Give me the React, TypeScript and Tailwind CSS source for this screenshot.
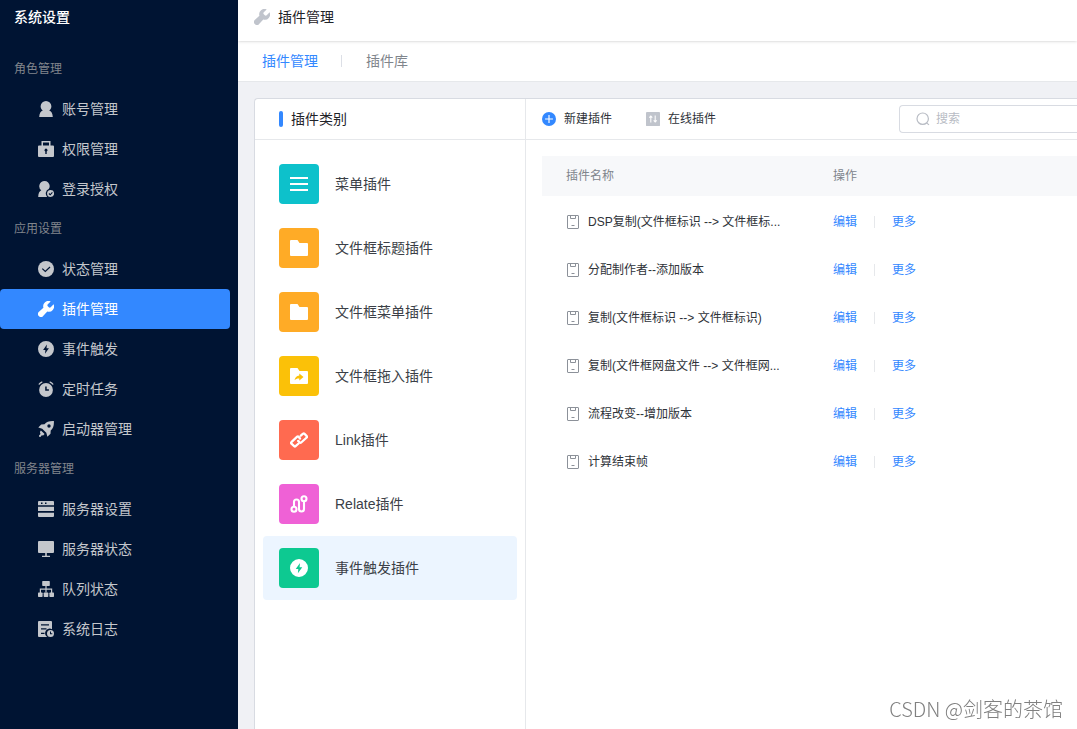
import React, { useState } from 'react';
import { clsx } from 'clsx';

type IconProps = { className?: string };

const Svg = ({ className = 'size-4', children }: IconProps & { children: React.ReactNode }) => (
  <svg viewBox="0 0 16 16" fill="currentColor" aria-hidden="true" className={clsx('shrink-0', className)}>
    {children}
  </svg>
);

const UserIcon = () => (
  <Svg>
    <path d="M8 0a5.400 5.400 0 0 1 5.400 5.200c0 1.900-.9 3.200-2.200 4.200 2 .8 3.400 2.600 3.600 6.600H1.200c.2-4 1.600-5.800 3.600-6.600C3.500 8.400 2.600 7.100 2.600 5.200A5.400 5.400 0 0 1 8 0z" />
  </Svg>
);

const LockIcon = () => (
  <Svg>
    <path
      fillRule="evenodd"
      d="M3.500 0h9v4.600H15a1 1 0 0 1 1 1V15a1 1 0 0 1-1 1H1a1 1 0 0 1-1-1V5.600a1 1 0 0 1 1-1h2.500zM5 1.500v3.100h6V1.500zM7.300 13h1.400v-2.400a1.500 1.500 0 1 0-1.400 0z"
    />
  </Svg>
);

const UserCheckIcon = () => (
  <Svg>
    <path d="M6.500 0a5.200 5.200 0 0 1 5.200 5.100c0 1.200-.4 2.200-1 3A4.800 4.800 0 0 0 9 15.700V16H.2c.1-3.800 1.200-5.700 3.100-6.700A5.200 5.200 0 0 1 6.500 0z" />
    <circle cx="12.600" cy="12.500" r="3.500" />
    <path d="M10.900 12.500l1.300 1.300 2.200-2.400" fill="none" stroke="#001433" strokeWidth="1.100" />
  </Svg>
);

const CheckIcon = () => (
  <Svg>
    <circle cx="8" cy="8" r="8" />
    <path d="M4.300 7.600l3 2.900 4.700-4.500" fill="none" stroke="#001433" strokeWidth="1.200" />
  </Svg>
);

const WrenchIcon = () => (
  <Svg>
    <path d="M12.700.4A5.300 5.300 0 0 0 5.400 6.700L.7 11.100a2.500 2.500 0 0 0-.1 3.600l.7.7a2.500 2.500 0 0 0 3.600-.1l4.400-4.700A5.300 5.300 0 0 0 15.600 3.300l-2.900 2.900a1.400 1.400 0 0 1-1.900 0l-1-1a1.400 1.400 0 0 1 0-1.900z" />
  </Svg>
);

const BoltIcon = ({ className }: IconProps) => (
  <Svg className={className}>
    <path
      fillRule="evenodd"
      d="M8 0a8 8 0 1 1 0 16A8 8 0 0 1 8 0zM8.900 3.500L5.100 8.900h2.300l-.4 3.800 3.900-5.400H8.500z"
    />
  </Svg>
);

const ClockIcon = () => (
  <Svg>
    <path fillRule="evenodd" d="M8 2.100a6.900 6.900 0 1 1 0 13.800A6.900 6.900 0 0 1 8 2.100zM7.200 5.400v4.400h3.700V8.300H8.700V5.400z" />
    <path d="M.9 3.500A6 6 0 0 1 4.300.8M15.100 3.500A6 6 0 0 0 11.700.8" fill="none" stroke="currentColor" strokeWidth="1.400" />
  </Svg>
);

const RocketIcon = () => (
  <Svg>
    <path
      fillRule="evenodd"
      d="M15.900.1c.2 4.700-.8 7.300-3.200 9.400l-.2 3.300-3.100 2.900-1.100-3.900L4.200 7.700.3 6.600l2.900-3.100 3.300-.2C8.600.9 11.200-.1 15.900.1zM11 3.300a1.700 1.700 0 1 0 0 3.400 1.700 1.700 0 0 0 0-3.400z"
    />
    <path d="M2.900 9.400l3.700 3.700-1.500 1.300-1.300-.2L2.400 15.900l-1.300-.1-.1-1.200 1.500-1.700-.6-1.900z" />
  </Svg>
);

const ServerIcon = () => (
  <Svg>
    <path
      fillRule="evenodd"
      d="M1 0h14a1 1 0 0 1 1 1v3.200H0V1a1 1 0 0 1 1-1zM3 1.400V3h1.500V1.400zM7 1.400V3h1.500V1.400zM0 5.800h16v4.300H0zM0 11.800h16V15a1 1 0 0 1-1 1H1a1 1 0 0 1-1-1z"
    />
  </Svg>
);

const MonitorIcon = () => (
  <Svg>
    <path d="M1 0h14a1 1 0 0 1 1 1v10a1 1 0 0 1-1 1H8.800v2.700H12V16H4v-1.300h3.200V12H1a1 1 0 0 1-1-1V1a1 1 0 0 1 1-1z" />
  </Svg>
);

const TreeIcon = () => (
  <Svg>
    <rect x="4.200" width="7.600" height="5" rx=".7" />
    <path d="M8 4.500v7M2.400 12V8.100h11.200V12" fill="none" stroke="currentColor" strokeWidth="1.200" />
    <rect y="11.500" width="4.600" height="4.500" rx=".7" />
    <rect x="5.700" y="11.500" width="4.600" height="4.500" rx=".7" />
    <rect x="11.400" y="11.500" width="4.600" height="4.500" rx=".7" />
  </Svg>
);

const LogIcon = () => (
  <Svg>
    <path
      fillRule="evenodd"
      d="M1 0h12a1 1 0 0 1 1 1v7.300a4.300 4.300 0 0 0-4.800 7.700H1a1 1 0 0 1-1-1V1a1 1 0 0 1 1-1zM3 3.300v1.200h8V3.300zM3 7.300v1.200h5.500V7.300zM3 11.700v1.200h3.500v-1.200z"
    />
    <path
      fillRule="evenodd"
      d="M12.500 9a3.500 3.500 0 1 1 0 7 3.500 3.500 0 0 1 0-7zM12 10.500v2.700h2.300v-1H13v-1.700z"
    />
  </Svg>
);

const MenuLines = () => (
  <svg viewBox="0 0 18 18" className="size-[18px]" stroke="white" strokeWidth="2" aria-hidden="true">
    <path d="M0 3h18M0 9h18M0 15h18" />
  </svg>
);

const FolderIcon = () => (
  <svg viewBox="0 0 18 18" className="size-[18px]" fill="white" aria-hidden="true">
    <path d="M1 1h6.500L9.500 4H17a1 1 0 0 1 1 1v11a1 1 0 0 1-1 1H1a1 1 0 0 1-1-1V2a1 1 0 0 1 1-1z" />
  </svg>
);

const FolderShareIcon = () => (
  <svg viewBox="0 0 18 18" className="size-[18px]" fill="white" aria-hidden="true">
    <path
      fillRule="evenodd"
      d="M1 1h6.500L9.500 4H17a1 1 0 0 1 1 1v11a1 1 0 0 1-1 1H1a1 1 0 0 1-1-1V2a1 1 0 0 1 1-1zM9.300 6.500v2C6.500 8.900 5 10.600 4.500 13.200c1.300-1.400 2.800-1.900 4.800-1.800v2.100l4.200-3.500z"
    />
  </svg>
);

const LinkIcon = () => (
  <svg
    viewBox="0 0 18 18"
    className="size-[18px]"
    fill="none"
    stroke="white"
    strokeWidth="2.300"
    strokeLinejoin="round"
    strokeLinecap="round"
    aria-hidden="true"
  >
    <path d="M8.600 12.500l-3 2.600a1 1 0 0 1-1.400 0L1.400 12.600a1 1 0 0 1 0-1.400l5.800-5.500a1 1 0 0 1 1.400 0L10 7.500" />
    <path d="M10.800 4.700l2.300-2a1 1 0 0 1 1.400 0l2.200 2.400a1 1 0 0 1 0 1.400l-5.500 5a1 1 0 0 1-1.400 0L8.200 9.900" />
  </svg>
);

const RelateIcon = () => (
  <svg viewBox="0 0 18 18" className="size-[18px]" fill="none" stroke="white" strokeWidth="2.100" aria-hidden="true">
    <circle cx="4" cy="14.300" r="2.500" />
    <circle cx="14" cy="3.700" r="2.500" />
    <path d="M4 12V7a2.500 2.500 0 0 1 5 0v7a2.500 2.500 0 0 0 5 0V6" />
  </svg>
);

const PlusIcon = () => (
  <Svg className="size-3.5">
    <circle cx="8" cy="8" r="8" fill="#3388ff" />
    <path d="M8 3.500v9M3.500 8h9" stroke="white" strokeWidth="1.300" />
  </Svg>
);

const OnlineIcon = () => (
  <Svg className="size-3.5">
    <rect width="16" height="16" rx="1" fill="#c0c4cc" />
    <path d="M5.500 12V4.500M3.800 6.500l1.700-2 1.700 2M10.500 4v7.500M8.800 9.500l1.700 2 1.700-2" fill="none" stroke="white" strokeWidth="1.200" />
  </Svg>
);

const PluginIcon = () => (
  <svg viewBox="0 0 14 14" className="size-3.5 shrink-0" fill="none" stroke="#8c9199" aria-hidden="true">
    <rect x="1.500" y=".5" width="11" height="13" rx=".5" />
    <path d="M4.500.5v3h5v-3M5.500 10.500h3" />
  </svg>
);

const SearchIcon = () => (
  <svg viewBox="0 0 14 14" className="size-3.5 shrink-0" fill="none" stroke="#b8bcc4" strokeWidth="1.200" aria-hidden="true">
    <circle cx="6.700" cy="6.700" r="5.700" />
    <path d="M10.600 10.900l2.400 2" />
  </svg>
);

const menuGroups = [
  {
    title: '角色管理',
    items: [
      { label: '账号管理', Icon: UserIcon },
      { label: '权限管理', Icon: LockIcon },
      { label: '登录授权', Icon: UserCheckIcon },
    ],
  },
  {
    title: '应用设置',
    items: [
      { label: '状态管理', Icon: CheckIcon },
      { label: '插件管理', Icon: WrenchIcon },
      { label: '事件触发', Icon: BoltIcon },
      { label: '定时任务', Icon: ClockIcon },
      { label: '启动器管理', Icon: RocketIcon },
    ],
  },
  {
    title: '服务器管理',
    items: [
      { label: '服务器设置', Icon: ServerIcon },
      { label: '服务器状态', Icon: MonitorIcon },
      { label: '队列状态', Icon: TreeIcon },
      { label: '系统日志', Icon: LogIcon },
    ],
  },
];

const categories = [
  { label: '菜单插件', color: 'bg-[#0dc1cb]', icon: <MenuLines /> },
  { label: '文件框标题插件', color: 'bg-[#ffab26]', icon: <FolderIcon /> },
  { label: '文件框菜单插件', color: 'bg-[#ffab26]', icon: <FolderIcon /> },
  { label: '文件框拖入插件', color: 'bg-[#fbc108]', icon: <FolderShareIcon /> },
  { label: 'Link插件', color: 'bg-[#ff6a50]', icon: <LinkIcon /> },
  { label: 'Relate插件', color: 'bg-[#ef61d6]', icon: <RelateIcon /> },
  { label: '事件触发插件', color: 'bg-[#0dc991]', icon: <BoltIcon className="size-[18px] text-white" /> },
];

const plugins = [
  'DSP复制(文件框标识 --> 文件框标...',
  '分配制作者--添加版本',
  '复制(文件框标识 --> 文件框标识)',
  '复制(文件框网盘文件 --> 文件框网...',
  '流程改变--增加版本',
  '计算结束帧',
];

const Sidebar = () => {
  const [active, setActive] = useState('插件管理');

  return (
    <aside className="w-[238px] shrink-0 bg-[#001433] text-sm">
      <h1 className="h-[49px] pl-3.5 pt-[7px] leading-5 font-medium text-white">系统设置</h1>
      <nav>
        {menuGroups.map((group) => (
          <section key={group.title}>
            <h2 className="flex h-10 items-center pl-3.5 text-xs text-[#80858c]">{group.title}</h2>
            {group.items.map(({ label, Icon }) => (
              <button
                key={label}
                onClick={() => setActive(label)}
                className={clsx(
                  'flex h-10 w-[230px] items-center gap-2 rounded pl-[38px]',
                  active === label ? 'bg-[#3388ff] text-white' : 'text-[#c4c7cc]'
                )}
              >
                <Icon />
                {label}
              </button>
            ))}
          </section>
        ))}
      </nav>
    </aside>
  );
};

const CategoryList = () => {
  const [selected, setSelected] = useState('事件触发插件');

  return (
    <div className="w-[271px] shrink-0 border-r border-[#e6e8eb]">
      <h2 className="flex h-[41px] items-center gap-2 border-b border-[#e6e8eb] pl-6 text-sm text-[#1f2329]">
        <span className="h-4 w-1 rounded-xs bg-[#3388ff]" />
        插件类别
      </h2>
      <div className="px-2 py-3">
        {categories.map((c) => (
          <button
            key={c.label}
            onClick={() => setSelected(c.label)}
            className={clsx(
              'flex h-16 w-full items-center gap-4 rounded px-4 text-sm text-[#3b3f47]',
              selected === c.label && 'bg-[#ecf5ff]'
            )}
          >
            <span className={clsx('flex size-10 items-center justify-center rounded', c.color)}>{c.icon}</span>
            {c.label}
          </button>
        ))}
      </div>
    </div>
  );
};

const PluginTable = () => (
  <div className="min-w-0 flex-1">
    <div className="flex h-[41px] items-center border-b border-[#e6e8eb] pl-4 text-xs text-[#2e3238]">
      <button className="flex items-center gap-2">
        <PlusIcon />
        新建插件
      </button>
      <button className="ml-[34px] flex items-center gap-2">
        <OnlineIcon />
        在线插件
      </button>
      <label className="ml-auto flex h-7 w-[178px] items-center gap-1.5 rounded-l border border-r-0 border-[#d8dbe2] pl-4">
        <SearchIcon />
        <input
          type="text"
          aria-label="搜索"
          placeholder="搜索"
          className="w-full min-w-0 outline-none placeholder:text-[#b8bcc4]"
        />
      </label>
    </div>
    <div className="pl-4 pt-4">
      <table className="w-full table-fixed text-left text-xs">
        <thead>
          <tr className="h-10 bg-[#f7f8fa] text-[#80858c]">
            <th className="w-[267px] px-6 font-normal">插件名称</th>
            <th className="px-6 font-normal">操作</th>
          </tr>
        </thead>
        <tbody>
          {plugins.map((name) => (
            <tr key={name} className="h-12 text-[#2e3238]">
              <td className="px-6 pt-1">
                <div className="flex items-center gap-2 whitespace-nowrap">
                  <PluginIcon />
                  {name}
                </div>
              </td>
              <td className="px-6 pt-1">
                <div className="flex items-center text-[#3388ff]">
                  <button>编辑</button>
                  <span className="mx-[17px] h-3 w-px bg-[#e6e8eb]" />
                  <button>更多</button>
                </div>
              </td>
            </tr>
          ))}
        </tbody>
      </table>
    </div>
  </div>
);

export default function App() {
  return (
    <div className="flex min-h-screen bg-[#f0f1f5] font-['Liberation_Sans','Noto_Sans_CJK_SC',sans-serif]">
      <Sidebar />
      <main className="flex min-w-0 flex-1 flex-col">
        <header className="relative flex h-[41px] items-start gap-2 bg-white px-4 pt-[7px] text-sm text-[#1f2329] shadow-sm">
          <span className="flex h-5 items-center text-[#c0c4cc]">
            <WrenchIcon />
          </span>
          <span className="leading-5">插件管理</span>
        </header>
        <nav className="flex h-[41px] items-center border-b border-[#e6e8eb] bg-white px-6 text-sm">
          <a href="#manage" className="text-[#3388ff]">插件管理</a>
          <span className="ml-[23px] mr-6 h-3 w-px bg-[#dcdfe6]" />
          <a href="#library" className="text-[#80858c]">插件库</a>
        </nav>
        <div className="flex flex-1 pl-4 pt-4">
          <div className="flex min-w-0 flex-1 rounded-tl border-l border-t border-[#d8dbe2] bg-white">
            <CategoryList />
            <PluginTable />
          </div>
        </div>
      </main>
      <div className="pointer-events-none fixed bottom-1.5 right-3.5 font-['Noto_Sans_CJK_SC',sans-serif] text-xl font-light text-[#808080]">
        CSDN @剑客的茶馆
      </div>
    </div>
  );
}
